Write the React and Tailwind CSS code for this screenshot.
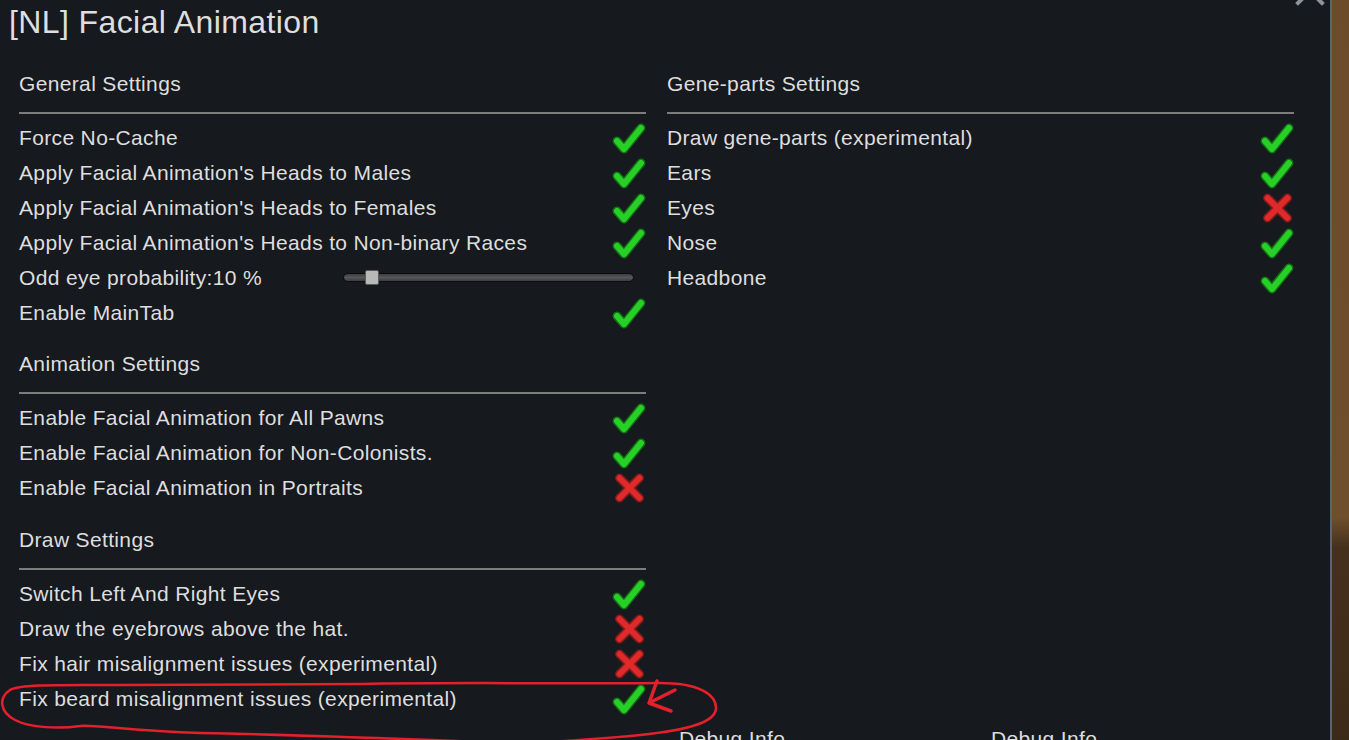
const Check = () => (
  <svg width="36" height="34" viewBox="0 0 36 34" className="shrink-0">
    <polyline points="7,20 14,28 31,7" fill="none" stroke="#126d14" strokeWidth="9" strokeLinecap="round" strokeLinejoin="round" />
    <polyline points="7,20 14,28 31,7" fill="none" stroke="#27cf27" strokeWidth="6" strokeLinecap="round" strokeLinejoin="round" />
  </svg>
);

const Cross = () => (
  <svg width="36" height="34" viewBox="0 0 36 34" className="shrink-0">
    <path d="M9.5 7 L29.5 27 M29.5 7 L9.5 27" fill="none" stroke="#7e1a1a" strokeWidth="9" strokeLinecap="round" />
    <path d="M9.5 7 L29.5 27 M29.5 7 L9.5 27" fill="none" stroke="#de2a2a" strokeWidth="6" strokeLinecap="round" />
  </svg>
);

const Row = ({ label, on }) => (
  <div className="flex h-[35px] items-center justify-between">
    <span>{label}</span>
    {on ? <Check /> : <Cross />}
  </div>
);

const Section = ({ title, className = "", children }) => (
  <div className={className}>
    <div className="h-[35px] leading-[35px]">{title}</div>
    <div className="mt-[11px] mb-[6px] h-[2px] bg-[#7d7d7d]" />
    {children}
  </div>
);

const App = () => {
  return (
    <div className="flex h-[740px] w-[1349px] overflow-hidden font-['Liberation_Sans',Arial,sans-serif] text-[21px] leading-[24px] tracking-[0.35px] text-[#dedede]">
      <div className="relative flex h-full w-[1332px] shrink-0 flex-col border-r-2 border-[#5b6470] bg-[#16191e]">
        <div className="h-[44px] pl-[9px] text-[32px] leading-[44px] tracking-[0.4px]">[NL] Facial Animation</div>

        <div className="mt-[22px] flex flex-1 gap-[21px] px-[19px]">
          <div className="w-[627px] pb-[40px]">
            <Section title="General Settings">
              <Row label="Force No-Cache" on />
              <Row label="Apply Facial Animation's Heads to Males" on />
              <Row label="Apply Facial Animation's Heads to Females" on />
              <Row label="Apply Facial Animation's Heads to Non-binary Races" on />
              <div className="flex h-[35px] items-center">
                <span className="w-[324px]">Odd eye probability:10 %</span>
                <div className="relative mr-[12px] flex-1">
                  <div className="h-[9px] rounded-full border border-[#0b0c0e] bg-[linear-gradient(to_bottom,#3c3d40,#55575a_50%,#3c3d40)]" />
                  <div className="absolute left-[22px] top-[-3px] h-[15px] w-[14px] rounded-[2px] border border-[#5a5a5a] bg-[#b9b9b9]" />
                </div>
              </div>
              <Row label="Enable MainTab" on />
            </Section>

            <Section title="Animation Settings" className="mt-[16px]">
              <Row label="Enable Facial Animation for All Pawns" on />
              <Row label="Enable Facial Animation for Non-Colonists." on />
              <Row label="Enable Facial Animation in Portraits" />
            </Section>

            <Section title="Draw Settings" className="mt-[17px]">
              <Row label="Switch Left And Right Eyes" on />
              <Row label="Draw the eyebrows above the hat." />
              <Row label="Fix hair misalignment issues (experimental)" />
              <Row label="Fix beard misalignment issues (experimental)" on />
            </Section>
          </div>

          <div className="flex w-[627px] flex-col">
            <Section title="Gene-parts Settings">
              <Row label="Draw gene-parts (experimental)" on />
              <Row label="Ears" on />
              <Row label="Eyes" />
              <Row label="Nose" on />
              <Row label="Headbone" on />
            </Section>
            <div className="mt-auto flex h-[35px] items-center">
              <span className="w-[324px] pl-[12px]">Debug Info</span>
              <span>Debug Info</span>
            </div>
          </div>
        </div>

        {/* close button, mostly off the top edge */}
        <svg className="absolute right-[5px] top-[-24px]" width="30" height="30" viewBox="0 0 30 30">
          <path d="M3 3 L27 27 M27 3 L3 27" stroke="#8d949b" strokeWidth="4" strokeLinecap="square" />
        </svg>

        {/* red pen annotation */}
        <svg className="pointer-events-none absolute left-0 top-[670px]" width="730" height="70" viewBox="0 670 730 70">
          <path
            d="M480 742 C380 738 300 735 200 733 C130 731 90 724 80 726 C60 729 30 728 15 720 C0 712 -2 698 10 690 C20 684 60 685 120 685 L360 684 C460 682 560 684 660 683 C700 683 716 695 716 708 C716 722 690 730 640 735 C610 738 580 740 550 742"
            fill="none"
            stroke="#e3202b"
            strokeWidth="2.5"
          />
          <path d="M657 681 L649 703 L675 690 M649 703 L671 711" fill="none" stroke="#e3202b" strokeWidth="3.5" strokeLinecap="round" strokeLinejoin="round" />
        </svg>
      </div>
      <div className="flex-1 bg-[linear-gradient(to_bottom,#6b4b2a_0%,#6e4e2c_70%,#45301c_74%,#3c2a18_100%)]" />
    </div>
  );
};

export default App;
